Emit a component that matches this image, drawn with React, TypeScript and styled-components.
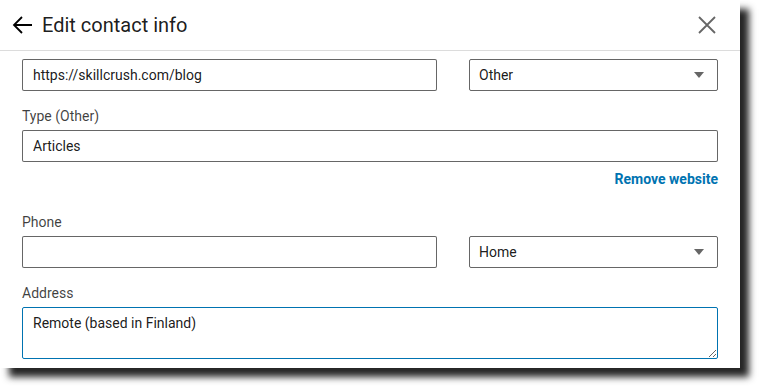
import styled, { createGlobalStyle } from "styled-components";

const GlobalStyle = createGlobalStyle`
  html, body {
    margin: 0;
    padding: 0;
    background: #ffffff;
    font-family: Roboto, "Liberation Sans", sans-serif;
    overflow: hidden;
  }
  body {
    min-height: 100vh;
  }
`;

const Modal = styled.div`
  width: 740px;
  height: 368px;
  background: #ffffff;
  box-shadow: 9px 9px 7px #262626;
  overflow: hidden;
  display: flex;
  flex-direction: column;
`;

const Header = styled.div`
  height: 50px;
  border-bottom: 1px solid #dcdcdc;
  display: flex;
  align-items: center;
  padding: 0 22px 0 11px;
  flex-shrink: 0;
`;

const IconButton = styled.button`
  border: none;
  background: none;
  padding: 0;
  margin: 0;
  display: flex;
  align-items: center;
  justify-content: center;
  cursor: pointer;
`;

const Title = styled.h2`
  margin: 0 0 0 7px;
  font-size: 20px;
  font-weight: 400;
  color: rgba(0, 0, 0, 0.9);
  flex: 1;
  line-height: 24px;
`;

const Body = styled.div`
  padding: 8px 22px 0 22px;
`;

const Row = styled.div<{ $split?: boolean }>`
  display: grid;
  grid-template-columns: ${(p) => (p.$split ? "415px 249px" : "696px")};
  column-gap: 32px;
`;

const Field = styled.div<{ $mt?: number }>`
  margin-top: ${(p) => p.$mt ?? 0}px;
`;

const Label = styled.label`
  display: block;
  font-size: 14px;
  line-height: 20px;
  color: rgba(0, 0, 0, 0.75);
  margin-bottom: 4px;
`;

const Input = styled.input`
  box-sizing: border-box;
  width: 100%;
  height: 32px;
  border: 1px solid rgba(0, 0, 0, 0.6);
  border-radius: 2px;
  padding: 0 10px;
  font-family: inherit;
  font-size: 14px;
  color: rgba(0, 0, 0, 0.9);
  background: #fff;
  outline: none;
`;

const SelectBox = styled.div`
  box-sizing: border-box;
  height: 32px;
  border: 1px solid rgba(0, 0, 0, 0.6);
  border-radius: 2px;
  padding: 0 13px 0 9px;
  display: flex;
  align-items: center;
  justify-content: space-between;
  font-size: 14px;
  color: rgba(0, 0, 0, 0.9);
`;

const Caret = styled.span`
  width: 0;
  height: 0;
  border-left: 5px solid transparent;
  border-right: 5px solid transparent;
  border-top: 6px solid #666;
`;

const TextArea = styled.textarea`
  box-sizing: border-box;
  display: block;
  width: 100%;
  height: 52px;
  border: 1px solid #0073b1;
  border-radius: 2px;
  padding: 5px 10px;
  font-family: inherit;
  font-size: 14px;
  line-height: 20px;
  color: rgba(0, 0, 0, 0.9);
  outline: none;
  resize: vertical;
`;

const LinkRow = styled.div`
  display: flex;
  justify-content: flex-end;
  margin-top: 7px;
`;

const TextLink = styled.a`
  font-size: 14px;
  line-height: 20px;
  font-weight: 700;
  color: #0073b1;
  text-decoration: none;
  cursor: pointer;
`;

const Select = ({ value }: { value: string }) => (
  <SelectBox>
    <span>{value}</span>
    <Caret />
  </SelectBox>
);

export default function App() {
  return (
    <>
      <GlobalStyle />
      <Modal>
        <Header>
          <IconButton aria-label="Back">
            <svg width="24" height="24" viewBox="0 0 24 24" fill="none">
              <path d="M21 12H3.5M11 4l-8 8 8 8" stroke="#000" strokeWidth="1.8" />
            </svg>
          </IconButton>
          <Title>Edit contact info</Title>
          <IconButton aria-label="Close">
            <svg width="22" height="22" viewBox="0 0 22 22" fill="none">
              <path d="M3 3l16 16M19 3L3 19" stroke="#666" strokeWidth="1.8" />
            </svg>
          </IconButton>
        </Header>
        <Body>
          <Row $split>
            <Input defaultValue="https://skillcrush.com/blog" />
            <Select value="Other" />
          </Row>
          <Field $mt={15}>
            <Label>Type (Other)</Label>
            <Input defaultValue="Articles" />
          </Field>
          <LinkRow>
            <TextLink>Remove website</TextLink>
          </LinkRow>
          <Field $mt={23}>
            <Label>Phone</Label>
            <Row $split>
              <Input defaultValue="" />
              <Select value="Home" />
            </Row>
          </Field>
          <Field $mt={15}>
            <Label>Address</Label>
            <TextArea defaultValue="Remote (based in Finland)" />
          </Field>
        </Body>
      </Modal>
    </>
  );
}
